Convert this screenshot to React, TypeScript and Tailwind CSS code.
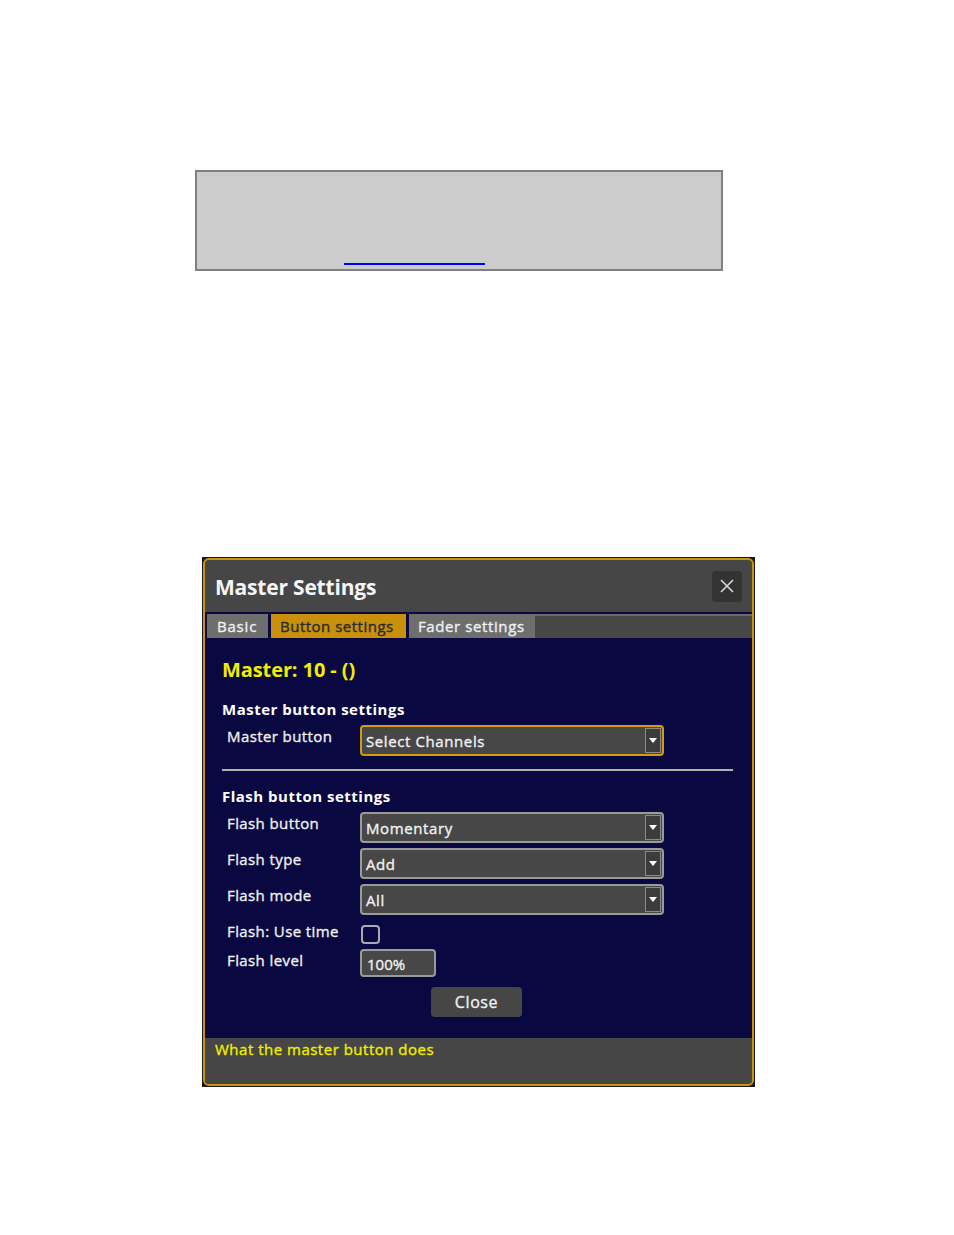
import React from "react";

const font = { fontFamily: '"Open Sans", "Noto Sans", sans-serif' };
const med = "[-webkit-text-stroke:0.35px_currentColor]";

function Select({ value, focused }: { value: string; focused?: boolean }) {
  return (
    <div
      className={`flex h-[31px] w-[304px] items-stretch rounded-[4px] border-2 bg-[#474747] ${
        focused ? "border-[#d39a12]" : "border-[#9a9a9a]"
      }`}
    >
      <div className={`flex flex-1 items-center pl-[4px] pt-[1px] text-[15px] leading-[20px] tracking-[0.6px] text-[#f2f2f2] ${med}`}>
        {value}
      </div>
      <div className="my-[1px] mr-[1px] flex w-[16px] items-center justify-center border border-[#8a8a8a] bg-[#3c3c3c]">
        <svg width="8" height="5" viewBox="0 0 8 5">
          <path d="M0 0 L8 0 L4 5 Z" fill="#ffffff" />
        </svg>
      </div>
    </div>
  );
}

function Row({ label, children, h = "h-[36px]" }: { label: string; children: React.ReactNode; h?: string }) {
  return (
    <div className={`flex ${h} items-start`}>
      <div className={`w-[138px] shrink-0 pl-[5px] pt-[1px] text-[15px] leading-[20px] tracking-[0.4px] text-[#f0f0f0] ${med}`}>
        {label}
      </div>
      {children}
    </div>
  );
}

export default function App() {
  return (
    <div className="min-h-[1235px] w-[954px] bg-white" style={font}>
      <div className="pl-[195px] pt-[170px]">
        <div className="relative h-[101px] w-[528px] border-2 border-[#808080] bg-[#cccccc]">
          <div className="absolute left-[147px] top-[91px] h-[2px] w-[141px] bg-[#0000ff]" />
        </div>
      </div>

      <div className="ml-[202px] mt-[286px] h-[530px] w-[553px] bg-[#1a1a1a] p-[1px]">
        <div className="flex h-full flex-col overflow-hidden rounded-[6px] border-2 border-[#c8930e] bg-[#464646]">
          {/* Title bar */}
          <div className="flex h-[52px] shrink-0 items-center justify-between pl-[10px] pr-[10px]">
            <div className="pt-[1px] text-[21px] font-bold leading-[28px] tracking-[-0.2px] text-[#f5f5f5]">
              Master Settings
            </div>
            <div className="flex h-[31px] w-[30px] items-center justify-center rounded-[4px] bg-[#333333]">
              <svg width="14" height="14" viewBox="0 0 14 14">
                <path d="M1 1 L13 13 M13 1 L1 13" stroke="#d8d8d8" strokeWidth="1.6" />
              </svg>
            </div>
          </div>
          <div className="h-[2px] shrink-0 bg-[#0a0840]" />
          {/* Tabs */}
          <div className="flex h-[24px] shrink-0 items-stretch bg-[#0a0840] pl-[2px]">
            <div className={`flex w-[61px] items-center bg-[#6e6e6e] pl-[10px] text-[15px] leading-[20px] tracking-[0.8px] text-[#f0f0f0] ${med}`}>
              Basic
            </div>
            <div className={`ml-[3px] flex w-[135px] items-center bg-[#c8900c] pl-[9px] text-[15px] leading-[20px] tracking-[0.5px] text-[#2a2a2a] ${med}`}>
              Button settings
            </div>
            <div className={`ml-[3px] flex w-[126px] items-center bg-[#6e6e6e] pl-[9px] text-[15px] leading-[20px] tracking-[0.6px] text-[#f0f0f0] ${med}`}>
              Fader settings
            </div>
            <div className="flex-1 border-t-2 border-[#6a6a6a] bg-[#474747]" />
          </div>
          {/* Content */}
          <div className="flex flex-1 flex-col bg-[#0a0840] pl-[17px] pr-[16px]">
            <div className="mt-[19px] text-[20px] font-bold leading-[26px] tracking-[-0.1px] text-[#f0ee00]">
              Master: 10 - ()
            </div>
            <div className="mt-[16px] text-[15px] font-bold leading-[20px] tracking-[0.5px] text-white">
              Master button settings
            </div>
            <div className="mt-[6px]">
              <Row label="Master button" h="h-[31px]">
                <Select value="Select Channels" focused />
              </Row>
            </div>
            <div className="mt-[13px] h-[2px] w-[511px] bg-[#b0b0b0]" />
            <div className="mt-[15px] text-[15px] font-bold leading-[20px] tracking-[0.5px] text-white">
              Flash button settings
            </div>
            <div className="mt-[6px]">
              <Row label="Flash button">
                <Select value="Momentary" />
              </Row>
              <Row label="Flash type">
                <Select value="Add" />
              </Row>
              <Row label="Flash mode">
                <Select value="All" />
              </Row>
              <Row label="Flash: Use time" h="h-[29px]">
                <div className="ml-[1px] mt-[5px] h-[19px] w-[19px] rounded-[4px] border-2 border-[#a8a8b8]" />
              </Row>
              <Row label="Flash level" h="h-[38px]">
                <div className={`flex h-[28px] w-[76px] items-center rounded-[4px] border-2 border-[#9a9a9a] bg-[#474747] pl-[5px] pt-[1px] text-[15px] leading-[20px] text-[#f2f2f2] ${med}`}>
                  100%
                </div>
              </Row>
            </div>
            <div className={`ml-[209px] flex h-[30px] w-[91px] items-center justify-center rounded-[4px] bg-[#464646] text-[16px] leading-[20px] tracking-[0.6px] text-[#f0f0f0] ${med}`}>
              Close
            </div>
          </div>
          {/* Footer */}
          <div className={`h-[46px] shrink-0 bg-[#464646] pl-[10px] pt-[1px] text-[15px] leading-[20px] tracking-[0.5px] text-[#f0ee00] ${med}`}>
            What the master button does
          </div>
        </div>
      </div>
    </div>
  );
}
